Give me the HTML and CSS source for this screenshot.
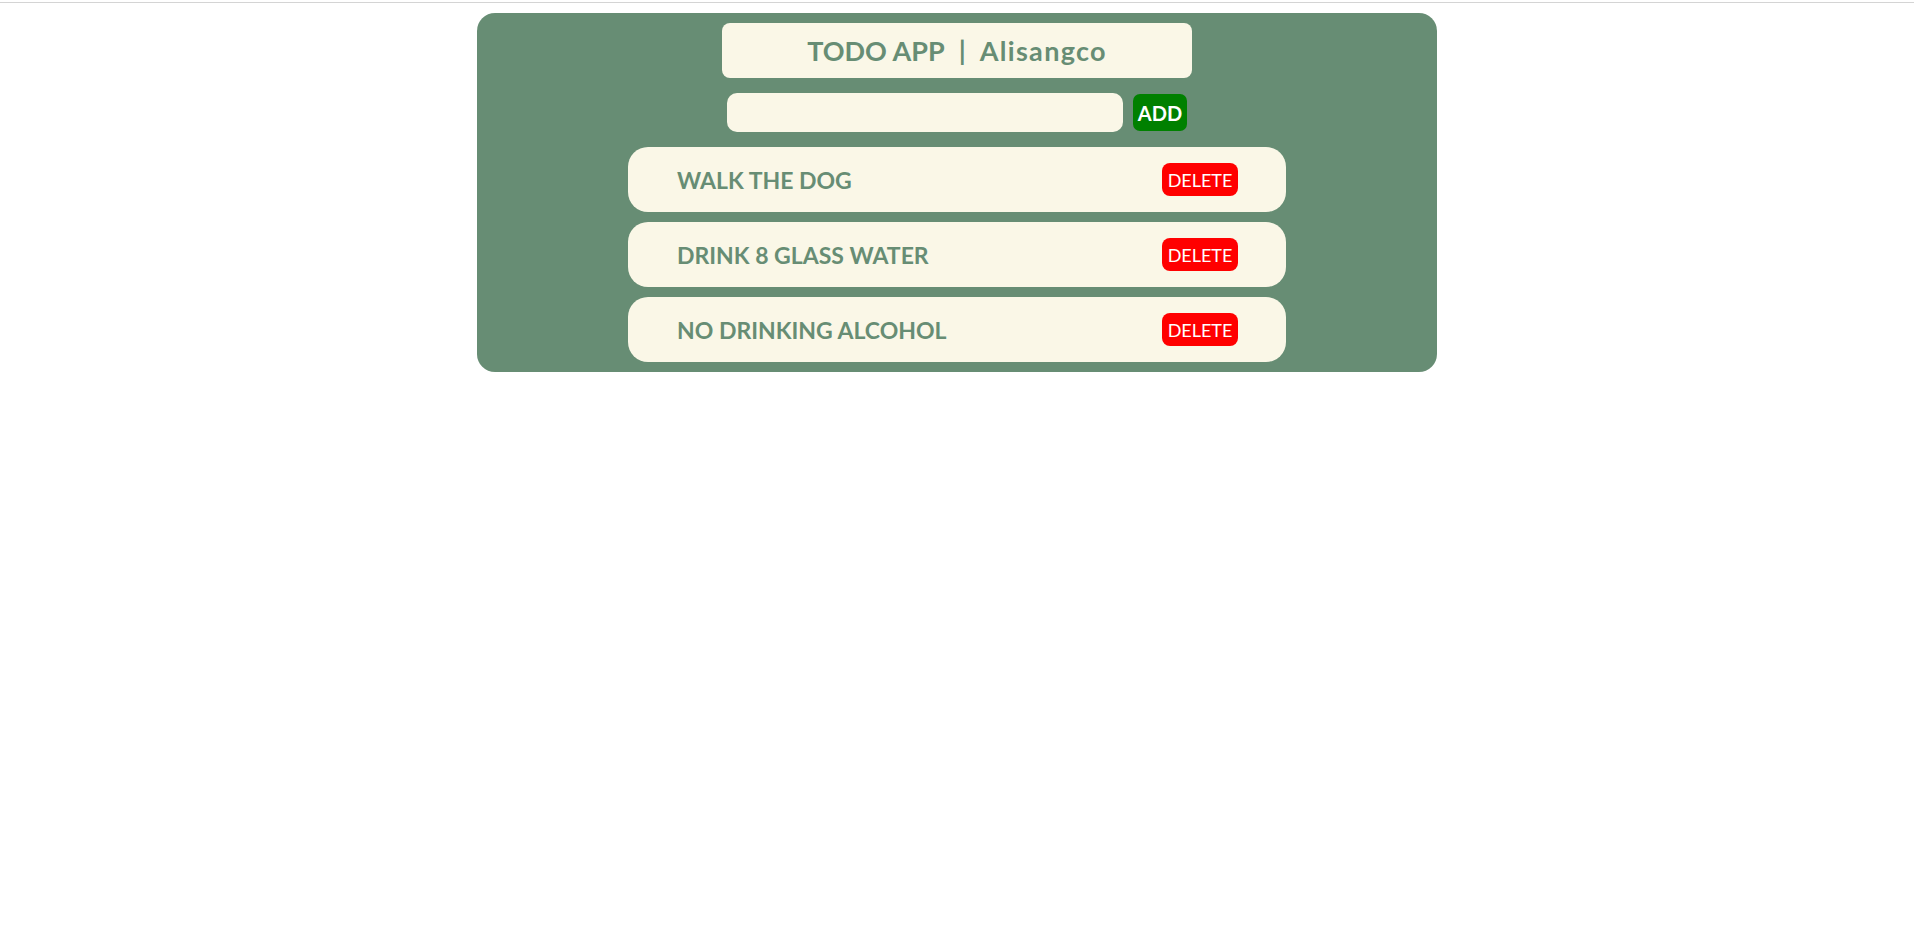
FILE: index.html
```html
<!DOCTYPE html>
<html>
<head>
<meta charset="utf-8">
<title>TODO APP</title>
<link rel="stylesheet" href="styles.css">
</head>
<body>
<div class="topline"></div>
<main class="app">
  <h1 class="title"><span>TODO APP</span><span class="pipe">|</span><span class="name">Alisangco</span></h1>
  <form class="add-row">
    <input class="add-input" type="text">
    <button class="add-btn" type="button">ADD</button>
  </form>
  <ul class="list">
    <li class="item"><span class="item-text">WALK THE DOG</span><button class="del-btn" type="button">DELETE</button></li>
    <li class="item"><span class="item-text">DRINK 8 GLASS WATER</span><button class="del-btn" type="button">DELETE</button></li>
    <li class="item"><span class="item-text">NO DRINKING ALCOHOL</span><button class="del-btn" type="button">DELETE</button></li>
  </ul>
</main>
</body>
</html>
```

FILE: styles.css
```css
* { box-sizing: border-box; }
html, body { margin: 0; padding: 0; background: #ffffff; }
body { font-family: Lato, "Open Sans", sans-serif; }

.topline {
  height: 1px;
  margin-top: 2px;
  background: #d4d4d4;
}

.app {
  width: 960px;
  margin: 10px auto 0;
  background: #678d74;
  border-radius: 18px;
  padding: 10px 0 10px;
  display: flex;
  flex-direction: column;
  align-items: center;
}

.title {
  margin: 0;
  width: 470px;
  height: 55px;
  background: #faf7e7;
  border-radius: 8px;
  color: #678d74;
  font-size: 27px;
  font-weight: 700;
  display: flex;
  align-items: center;
  justify-content: center;
}

.pipe {
  margin: 0 14px 0 14px;
}

.name {
  letter-spacing: 1.3px;
}

.add-row {
  margin: 15px 0 0;
  display: flex;
  align-items: center;
  gap: 10px;
}

.add-input {
  width: 396px;
  height: 39px;
  border: none;
  border-radius: 10px;
  background: #faf7e7;
  outline: none;
  padding: 0 10px;
  font-family: inherit;
  font-size: 18px;
  color: #678d74;
}

.add-btn {
  width: 54px;
  height: 37px;
  border: none;
  border-radius: 7px;
  background: #008000;
  color: #ffffff;
  font-family: inherit;
  font-size: 20px;
  font-weight: 700;
  padding: 0;
}

.list {
  list-style: none;
  margin: 15px 0 0;
  padding: 0;
  display: flex;
  flex-direction: column;
  gap: 10px;
}

.item {
  width: 658px;
  height: 65px;
  background: #faf7e7;
  border-radius: 20px;
  display: flex;
  align-items: center;
  justify-content: space-between;
  padding: 0 48px 0 49px;
}

.item-text {
  color: #678d74;
  font-size: 23px;
  font-weight: 700;
}

.del-btn {
  width: 76px;
  height: 33px;
  border: none;
  border-radius: 8px;
  background: #ff0000;
  color: #ffffff;
  font-family: inherit;
  font-size: 18px;
  padding: 0;
}
```
